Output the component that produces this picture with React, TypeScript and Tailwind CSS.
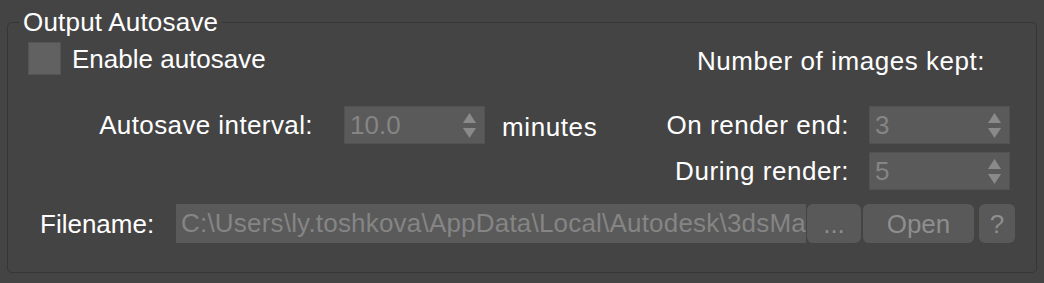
import React from 'react';

function Arrows() {
  return (
    <div className="flex flex-col items-center gap-[5px] pr-[8px]">
      <svg width="13" height="10" viewBox="0 0 13 10">
        <path d="M6.5 0 L13 10 L0 10 Z" fill="#8a8a8a" />
      </svg>
      <svg width="13" height="10" viewBox="0 0 13 10">
        <path d="M0 0 L13 0 L6.5 10 Z" fill="#8a8a8a" />
      </svg>
    </div>
  );
}

function Spinner({ value }: { value: string }) {
  return (
    <div className="flex h-[38px] w-[141px] items-center justify-between border border-[#525252] bg-[#5a5a5a]">
      <span className="pl-[5px] text-[#858585]">{value}</span>
      <Arrows />
    </div>
  );
}

function Btn({ children, w }: { children: React.ReactNode; w: string }) {
  return (
    <button className={`flex h-[39px] items-center justify-center rounded-[6px] bg-[#595959] text-[#8e8e8e] ${w}`}>
      {children}
    </button>
  );
}

export default function App() {
  return (
    <div
      className="h-[283px] w-[1044px] overflow-hidden bg-[#444444] pt-[22px] pl-[7px] text-[26px] leading-none text-white"
      style={{ fontFamily: '"Liberation Sans", Arial, sans-serif' }}
    >
      <div className="relative h-[251px] w-[1030px] rounded-[5px] border border-[#363636]">
        {/* legend */}
        <div className="absolute -top-[14px] left-[11px] bg-[#444444] px-[4px] leading-[26px] tracking-[0.2px]">
          Output Autosave
        </div>

        <div className="flex pt-[19px]">
          {/* left column */}
          <div className="flex w-[612px] flex-col">
            <div className="flex h-[33px] items-center pl-[20px]">
              <div className="h-[33px] w-[33px] border border-[#545454] bg-[#616161]" />
              <span className="ml-[11px]">Enable autosave</span>
            </div>
            <div className="mt-[31px] flex h-[38px] items-center">
              <span className="w-[305px] text-right tracking-[0.4px]">Autosave interval:</span>
              <div className="ml-[31px]">
                <Spinner value="10.0" />
              </div>
              <span className="ml-[17px] pt-[3px] tracking-[0.6px]">minutes</span>
            </div>
          </div>

          {/* right column */}
          <div className="flex flex-col">
            <div className="flex h-[33px] items-center pl-[77px] pt-[5px] tracking-[0.55px]">Number of images kept:</div>
            <div className="mt-[31px] flex h-[38px] items-center">
              <span className="w-[229px] text-right tracking-[0.55px]">On render end:</span>
              <div className="ml-[20px]">
                <Spinner value="3" />
              </div>
            </div>
            <div className="mt-[8px] flex h-[38px] items-center">
              <span className="w-[229px] text-right tracking-[0.55px]">During render:</span>
              <div className="ml-[20px]">
                <Spinner value="5" />
              </div>
            </div>
          </div>
        </div>

        {/* filename row */}
        <div className="mt-[14px] flex h-[39px] items-center pl-[32px]">
          <span className="w-[136px]">Filename:</span>
          <div className="h-[39px] w-[630px] overflow-hidden whitespace-nowrap bg-[#5a5a5a] pl-[5px] leading-[39px] tracking-[0.2px] text-[#858585]">
            C:\Users\ly.toshkova\AppData\Local\Autodesk\3dsMax\2024 - 64bit\ENU\autosave
          </div>
          <div className="ml-[1px]">
            <Btn w="w-[54px]">...</Btn>
          </div>
          <div className="ml-[2px]">
            <Btn w="w-[111px]">Open</Btn>
          </div>
          <div className="ml-[5px]">
            <Btn w="w-[36px]">?</Btn>
          </div>
        </div>
      </div>
    </div>
  );
}
